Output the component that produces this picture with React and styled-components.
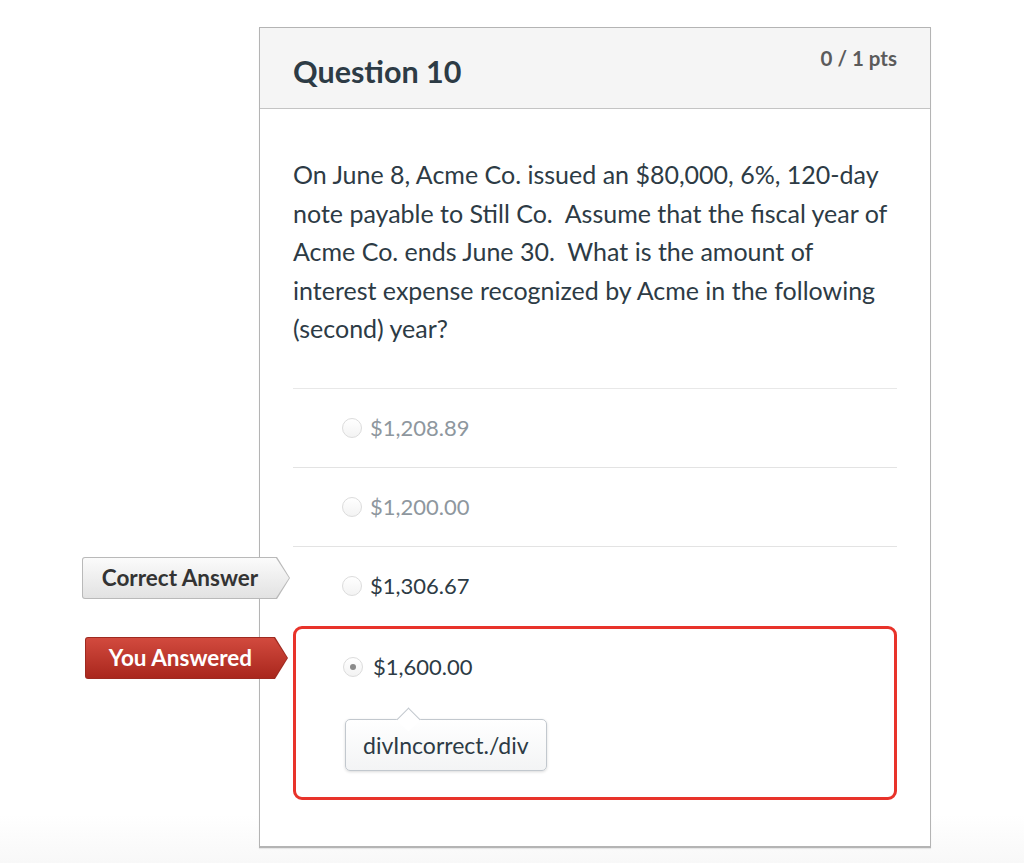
import React from 'react';
import styled, { createGlobalStyle } from 'styled-components';

const GlobalStyle = createGlobalStyle`
  html, body {
    margin: 0;
    padding: 0;
  }
  body {
    font-family: Lato, "Open Sans", "Liberation Sans", sans-serif;
    background: linear-gradient(to bottom, #ffffff 815px, #f8f8f8 863px);
    min-height: 863px;
    color: #2d3b45;
  }
`;

const answers = [
  { id: 1, text: '$1,208.89', muted: true },
  { id: 2, text: '$1,200.00', muted: true },
  { id: 3, text: '$1,306.67', tag: 'correct' },
];

const App = () => {
  return (
    <Page>
      <GlobalStyle />
      <Card>
        <Header>
          <Title>Question 10</Title>
          <Points>0 / 1 pts</Points>
        </Header>
        <Body>
          <QuestionText>
            On June 8, Acme Co. issued an $80,000, 6%, 120-day note payable to Still Co.&nbsp; Assume that the
            fiscal year of Acme Co. ends June 30.&nbsp; What is the amount of interest expense recognized by Acme in
            the following (second) year?
          </QuestionText>
          <AnswerList>
            {answers.map((a, i) => (
              <AnswerRow key={a.id} $divider={i < 2}>
                {a.tag === 'correct' && (
                  <Tag $variant="correct" $offset={3} $top={10}>
                    <TagInner $variant="correct">Correct Answer</TagInner>
                  </Tag>
                )}
                <Radio />
                <AnswerText $muted={a.muted}>{a.text}</AnswerText>
              </AnswerRow>
            ))}
            <WrongBox>
              <Tag $variant="wrong" $offset={8} $top={8}>
                <TagInner $variant="wrong">You Answered</TagInner>
              </Tag>
              <SelectedRow>
                <Radio $checked />
                <AnswerText $dark>$1,600.00</AnswerText>
              </SelectedRow>
              <Tip>divIncorrect./div</Tip>
            </WrongBox>
          </AnswerList>
        </Body>
      </Card>
    </Page>
  );
};

export default App;

const Page = styled.div`
  padding: 27px 0 0 259px;
`;

const Card = styled.div`
  box-sizing: border-box;
  width: 672px;
  border: 1px solid #b4b4b4;
  border-bottom-width: 2px;
  background: #fff;
  box-shadow: 0 1px 1px rgba(0, 0, 0, 0.08);
`;

const Header = styled.div`
  display: flex;
  justify-content: space-between;
  align-items: flex-start;
  height: 80px;
  padding: 0 33px;
  background-color: #f5f5f5;
  border-bottom: 1px solid #c4c4c4;
`;

const Title = styled.h2`
  margin: 25px 0 0;
  font-size: 30.5px;
  line-height: 1.2;
  font-weight: 700;
  color: #2d3b45;
`;

const Points = styled.div`
  margin-top: 18px;
  font-size: 20.5px;
  line-height: 1.2;
  font-weight: 700;
  color: #5b5b5b;
`;

const Body = styled.div`
  padding: 46px 33px 46px;
`;

const QuestionText = styled.p`
  margin: 0 0 40px;
  font-size: 25px;
  line-height: 38.6px;
  color: #2d3b45;
`;

const AnswerList = styled.div`
  border-top: 1px solid #e8e8e8;
`;

const AnswerRow = styled.div`
  position: relative;
  display: flex;
  align-items: center;
  height: 78px;
  padding-left: 49px;
  border-bottom: 1px solid ${(p) => (p.$divider ? '#e3e3e3' : 'transparent')};
`;

const Radio = styled.span`
  position: relative;
  box-sizing: border-box;
  flex: none;
  width: 20px;
  height: 20px;
  margin-right: 8px;
  border-radius: 50%;
  border: 1px solid #dcdcdc;
  background: linear-gradient(to bottom, #ffffff, #f3f3f3);

  &::after {
    content: '';
    display: ${(p) => (p.$checked ? 'block' : 'none')};
    position: absolute;
    left: 6px;
    top: 6px;
    width: 6px;
    height: 6px;
    border-radius: 50%;
    background: #8a8a8a;
  }
`;

const AnswerText = styled.span`
  font-size: 22px;
  color: ${(p) => (p.$muted ? '#8e979e' : '#2d3b45')};
  margin-left: ${(p) => (p.$dark ? '2px' : '0')};
`;

const WrongBox = styled.div`
  position: relative;
  box-sizing: border-box;
  height: 174px;
  padding: 28px 0 0 47px;
  border: 3px solid #e8332a;
  border-radius: 9px;
`;

const SelectedRow = styled.div`
  display: flex;
  align-items: center;
  height: 20px;
`;

const Tip = styled.div`
  position: relative;
  box-sizing: border-box;
  display: inline-flex;
  align-items: center;
  height: 52px;
  margin: 42px 0 0 2px;
  padding: 0 17px;
  font-size: 23px;
  color: #2d3b45;
  background: linear-gradient(to bottom, #ffffff, #f3f4f5);
  border: 1px solid #c2c8ce;
  border-radius: 5px;
  box-shadow: 0 1px 3px rgba(0, 0, 0, 0.15);

  &::before {
    content: '';
    position: absolute;
    left: 54px;
    top: -9px;
    width: 16px;
    height: 16px;
    background: #ffffff;
    border-left: 1px solid #c2c8ce;
    border-top: 1px solid #c2c8ce;
    transform: rotate(45deg);
  }
`;

const arrowShape = 'polygon(0 0, calc(100% - 13px) 0, 100% 50%, calc(100% - 13px) 100%, 0 100%)';

const Tag = styled.div`
  position: absolute;
  top: ${(p) => p.$top}px;
  right: calc(100% + ${(p) => p.$offset}px);
  width: ${(p) => (p.$variant === 'correct' ? 208 : 203)}px;
  height: 42px;
  padding: 1px;
  box-sizing: border-box;
  border-radius: 3px;
  clip-path: ${arrowShape};
  background: ${(p) => (p.$variant === 'correct' ? '#b9b9b9' : '#9e2a20')};
`;

const TagInner = styled.div`
  display: flex;
  align-items: center;
  justify-content: center;
  height: 100%;
  padding-right: 12px;
  border-radius: 2px;
  clip-path: ${arrowShape};
  font-size: 22.5px;
  font-weight: 700;
  color: ${(p) => (p.$variant === 'correct' ? '#333333' : '#ffffff')};
  background: ${(p) =>
    p.$variant === 'correct'
      ? 'linear-gradient(to bottom, #fbfbfb, #e2e2e2)'
      : 'linear-gradient(to bottom, #d24a3e, #a9271d)'};
`;
